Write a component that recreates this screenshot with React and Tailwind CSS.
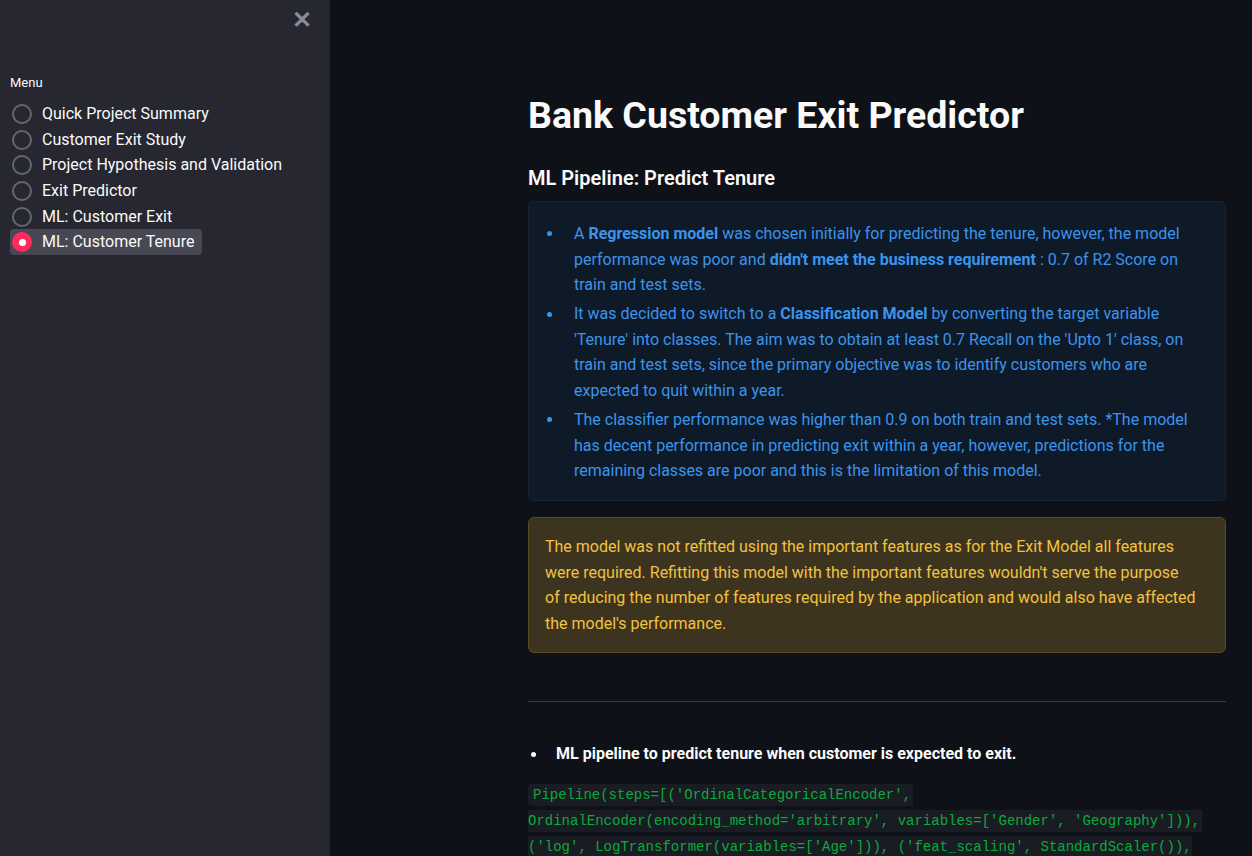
import React from "react";

const menuItems = [
  "Quick Project Summary",
  "Customer Exit Study",
  "Project Hypothesis and Validation",
  "Exit Predictor",
  "ML: Customer Exit",
  "ML: Customer Tenure",
];

const Radio = ({ checked }) =>
  checked ? (
    <span className="flex h-[20px] w-[20px] items-center justify-center rounded-full bg-[#ff2b5e]">
      <span className="h-[7px] w-[7px] rounded-full bg-white" />
    </span>
  ) : (
    <span className="h-[20px] w-[20px] rounded-full border-2 border-[#66676e]" />
  );

const Sidebar = () => (
  <aside className="h-[856px] w-[330px] shrink-0 bg-[#262730] px-[10px]">
    <div className="flex justify-end pr-[8px] pt-[9px]">
      <span className="text-[24px] font-bold leading-[22px] text-[#8b8c93]">✕</span>
    </div>
    <p className="mt-[42px] text-[13px] text-[#fafafa]">Menu</p>
    <div className="mt-[9px] flex flex-col items-start">
      {menuItems.map((item, i) => {
        const active = i === menuItems.length - 1;
        return (
          <div
            key={item}
            className={
              "flex h-[25.6px] items-center gap-[10px] rounded-[4px] pl-[2px] pr-[8px] " +
              (active ? "bg-[#474853]" : "")
            }
          >
            <Radio checked={active} />
            <span className="text-[16px] text-[#fafafa]">{item}</span>
          </div>
        );
      })}
    </div>
  </aside>
);

// list row with a round dot instead of the browser marker
const Bullet = ({ children, dot = "bg-[#3b94eb]", indent = "w-[29px] pl-[2px]" }) => (
  <li className="flex">
    <span className={"flex h-[25.6px] shrink-0 items-center " + indent}>
      <span className={"h-[5px] w-[5px] rounded-full " + dot} />
    </span>
    <span>{children}</span>
  </li>
);

const Main = () => (
  <main className="h-[856px] flex-1 overflow-hidden bg-[#0e1117]">
    <div className="ml-[198px] w-[698px] pt-[92px]">
      <h1 className="text-[37.5px] font-bold leading-[46px] text-[#fafafa]">
        Bank Customer Exit Predictor
      </h1>

      <h3 className="mt-[24px] text-[20px] font-semibold leading-[32px] text-[#fafafa]">
        ML Pipeline: Predict Tenure
      </h3>

      <div className="mt-[7px] rounded-[6px] border border-[#16243a] bg-[#0f1a29] px-[16px] pb-[16px] pt-[19px] text-[16px] leading-[25.6px] text-[#3b94eb]">
        <ul className="space-y-[3.5px]">
          <Bullet>
            A <b>Regression model</b> was chosen initially for predicting the tenure, however, the model
            performance was poor and <b>didn't meet the business requirement</b> : 0.7 of R2 Score on
            train and test sets.
          </Bullet>
          <Bullet>
            It was decided to switch to a <b>Classification Model</b> by converting the target variable
            'Tenure' into classes. The aim was to obtain at least 0.7 Recall on the 'Upto 1' class, on
            train and test sets, since the primary objective was to identify customers who are expected
            to quit within a year.
          </Bullet>
          <Bullet>
            The classifier performance was higher than 0.9 on both train and test sets. *The model has
            decent performance in predicting exit within a year, however, predictions for the remaining
            classes are poor and this is the limitation of this model.
          </Bullet>
        </ul>
      </div>

      <div className="mt-[16px] rounded-[6px] border border-[#5b4c1f] bg-[#3d3420] px-[16px] pb-[16px] pt-[16px] text-[16px] leading-[25.6px] text-[#f2c23f]">
        The model was not refitted using the important features as for the Exit Model all features
        <br />
        were required. Refitting this model with the important features wouldn't serve the purpose
        <br />
        of reducing the number of features required by the application and would also have affected
        <br />
        the model's performance.
      </div>

      <hr className="mt-[48px] border-t border-[#3a3c44]" />

      <ul className="mt-[39px] text-[16px] font-bold leading-[26px] text-[#fafafa]">
        <Bullet dot="bg-[#fafafa]" indent="w-[28px] pl-[3px]">
          ML pipeline to predict tenure when customer is expected to exit.
        </Bullet>
      </ul>

      <div className="mt-[15px] font-['Liberation_Mono',monospace] text-[14px] leading-[26px] text-[#09ab3b]">
        <div>
          <span className="rounded-l-[4px] bg-[#1a1c24] py-[3px] pl-[5px] pr-[2px]">
            Pipeline(steps=[('OrdinalCategoricalEncoder',
          </span>
        </div>
        <div>
          <span className="bg-[#1a1c24] py-[3px] pr-[2px]">
            OrdinalEncoder(encoding_method='arbitrary', variables=['Gender', 'Geography'])),
          </span>
        </div>
        <div>
          <span className="bg-[#1a1c24] py-[3px]">
            ('log', LogTransformer(variables=['Age'])), ('feat_scaling', StandardScaler()),
          </span>
        </div>
      </div>
    </div>
  </main>
);

export default function App() {
  return (
    <div className="flex h-[856px] w-[1252px] overflow-hidden font-['Roboto',sans-serif]">
      <Sidebar />
      <Main />
    </div>
  );
}
